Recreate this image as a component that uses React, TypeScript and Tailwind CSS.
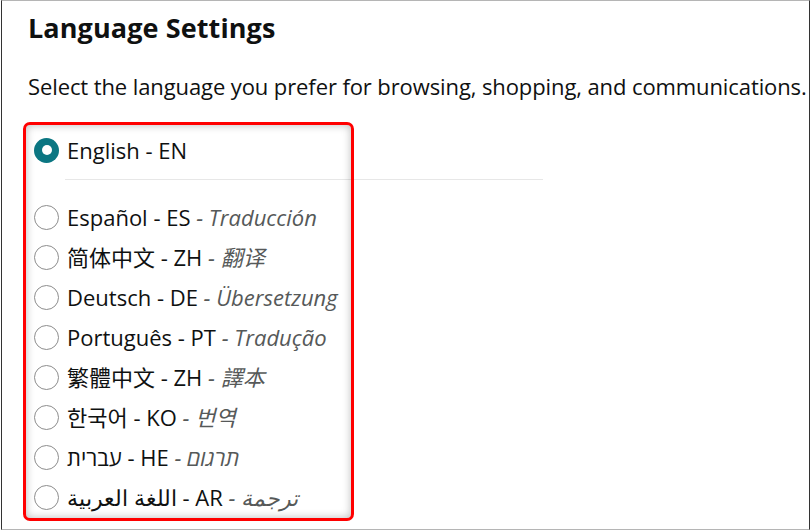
import React, { useState } from "react";

type Lang = {
  code: string;
  name: string;
  rtl?: boolean;
  hint?: string;
};

const languages: Lang[] = [
  { code: "ES", name: "Español", hint: "Traducción" },
  { code: "ZH", name: "简体中文", hint: "翻译" },
  { code: "DE", name: "Deutsch", hint: "Übersetzung" },
  { code: "PT", name: "Português", hint: "Tradução" },
  { code: "ZH-TW", name: "繁體中文", hint: "譯本" },
  { code: "KO", name: "한국어", hint: "번역" },
  { code: "HE", name: "עברית", hint: "תרגום", rtl: true },
  { code: "AR", name: "اللغة العربية", hint: "ترجمة", rtl: true },
];

const Radio = ({ checked }: { checked: boolean }) =>
  checked ? (
    <span className="flex h-[25px] w-[25px] shrink-0 items-center justify-center rounded-full bg-[#0b7682]">
      <span className="h-[10px] w-[10px] rounded-full bg-white" />
    </span>
  ) : (
    <span className="h-[25px] w-[25px] shrink-0 rounded-full border-[1.5px] border-[#8d8d8d] bg-white" />
  );

export default function App() {
  const [selected, setSelected] = useState("EN");

  return (
    <div
      className="h-[530px] w-[812px] bg-white pl-px text-[#0f1111]"
      style={{ fontFamily: '"Open Sans", "Noto Sans", "Noto Sans CJK SC", sans-serif' }}
    >
      <div className="relative h-[530px] w-[809px] border-x border-y border-x-[#333] border-y-[#b5b5b5]">
        <div className="pl-[26px] pt-[9px]">
          <h1 className="text-[27px] font-bold leading-[36px] tracking-[0.1px]">Language Settings</h1>
          <p className="mt-[25px] whitespace-nowrap text-[22px] leading-[30px] tracking-[-0.1px]">
            Select the language you prefer for browsing, shopping, and communications.
          </p>

          {/* list */}
          <div className="mt-[29px] pl-[6px]">
            <label
              className="flex h-[40px] cursor-pointer items-center gap-[8px]"
              onClick={() => setSelected("EN")}
            >
              <Radio checked={selected === "EN"} />
              <span className="text-[22px]">English - EN</span>
            </label>
            <div className="ml-[31px] mt-[9px] h-px w-[478px] bg-[#e7e7e7]" />
            <div className="mt-[17px] flex flex-col">
              {languages.map((l) => (
                <label
                  key={l.code}
                  className="flex h-[40px] cursor-pointer items-center gap-[8px]"
                  onClick={() => setSelected(l.code)}
                >
                  <Radio checked={selected === l.code} />
                  <span className="whitespace-nowrap text-[22px]">
                    <span dir={l.rtl ? "rtl" : undefined} className="[unicode-bidi:isolate]">
                      {l.name}
                    </span>{" "}
                    - {l.code === "ZH-TW" ? "ZH" : l.code}{" "}
                    <span className="italic text-[#565959]">
                      -{" "}
                      <span dir={l.rtl ? "rtl" : undefined} className="[unicode-bidi:isolate]">
                        {l.hint}
                      </span>
                    </span>
                  </span>
                </label>
              ))}
            </div>
          </div>
        </div>

        {/* red highlight box */}
        <div className="pointer-events-none absolute left-[21px] top-[121px] h-[399px] w-[331px] rounded-[7px] border-[3px] border-[#ff0000] shadow-[inset_0_0_8px_rgba(0,0,0,0.28)]" />
      </div>
    </div>
  );
}
